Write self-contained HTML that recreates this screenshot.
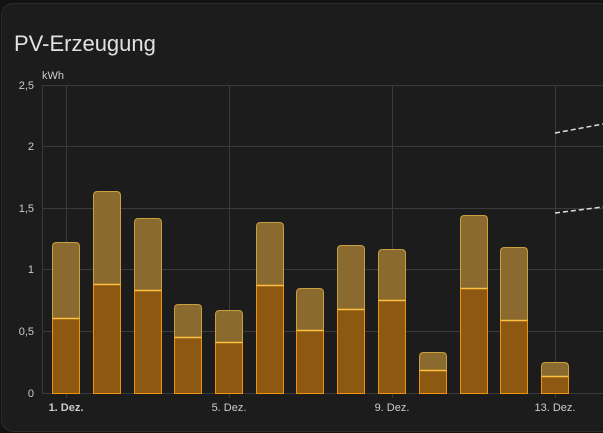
<!DOCTYPE html><html><head><style>
html,body{margin:0;background:#121212;width:603px;height:433px;overflow:hidden}
.card{position:absolute;left:1px;top:3px;width:620px;height:427px;background:#1c1c1c;border:1px solid #2a2a2a;border-radius:12px}
svg{position:absolute;left:0;top:0}
</style></head><body><div class="card"></div>
<svg width="603" height="433" font-family="Liberation Sans, sans-serif">
<text x="14" y="51" font-size="22" fill="#e1e1e1">PV-Erzeugung</text>
<text x="42" y="79" font-size="11" fill="#ccc">kWh</text>
<g stroke="#3a3a3a" stroke-width="1">
<line x1="42" y1="85.5" x2="603" y2="85.5"/><line x1="42" y1="146.5" x2="603" y2="146.5"/>
<line x1="42" y1="208.5" x2="603" y2="208.5"/><line x1="42" y1="269.5" x2="603" y2="269.5"/>
<line x1="42" y1="331.5" x2="603" y2="331.5"/><line x1="42" y1="393.5" x2="603" y2="393.5"/>
<line x1="42.5" y1="85" x2="42.5" y2="393"/><line x1="66.5" y1="85" x2="66.5" y2="398"/>
<line x1="229.5" y1="85" x2="229.5" y2="398"/><line x1="392.5" y1="85" x2="392.5" y2="398"/>
<line x1="555.5" y1="85" x2="555.5" y2="398"/>
</g>
<g font-size="11" fill="#ccc" text-anchor="end">
<text x="34" y="89">2,5</text><text x="34" y="150">2</text><text x="34" y="212">1,5</text>
<text x="34" y="273">1</text><text x="34" y="335">0,5</text><text x="34" y="397">0</text>
</g>
<g font-size="11" fill="#ccc" text-anchor="middle">
<text x="66" y="411" font-weight="bold">1. Dez.</text><text x="229" y="411">5. Dez.</text>
<text x="392" y="411">9. Dez.</text><text x="555" y="411">13. Dez.</text>
</g>
<g id="bars"></g>
<g stroke="#ddd" stroke-width="1.5" stroke-dasharray="5,3" fill="none">
<line x1="555" y1="133" x2="603" y2="124"/><line x1="555" y1="213" x2="603" y2="207"/>
</g>
</svg>
<script>
var d=[[52,242,318],[93,191,284],[134,218,290],[174,304,337],[215,310,342],[256,222,285],[296,288,330],[337,245,309],[378,249,300],[419,352,370],[460,215,288],[500,247,320],[541,362,376]];
var s='';d.forEach(function(b){var x=b[0]+.5,w=27,t=b[1]+.5,m=b[2]+.5,y=393.5,r=4;
s+='<path d="M'+x+' '+m+'V'+(t+r)+'Q'+x+' '+t+' '+(x+r)+' '+t+'H'+(x+w-r)+'Q'+(x+w)+' '+t+' '+(x+w)+' '+(t+r)+'V'+m+'Z" fill="#8a6a2e" stroke="#c9a040" stroke-width="1"/>';
s+='<rect x="'+x+'" y="'+m+'" width="'+w+'" height="'+(y-m)+'" fill="#8c5812" stroke="#f0920a" stroke-width="1"/>';
s+='<line x1="'+x+'" y1="'+m+'" x2="'+(x+w)+'" y2="'+m+'" stroke="#ffc040" stroke-width="1.5"/>';});
document.getElementById('bars').innerHTML=s;
</script>
</body></html>
